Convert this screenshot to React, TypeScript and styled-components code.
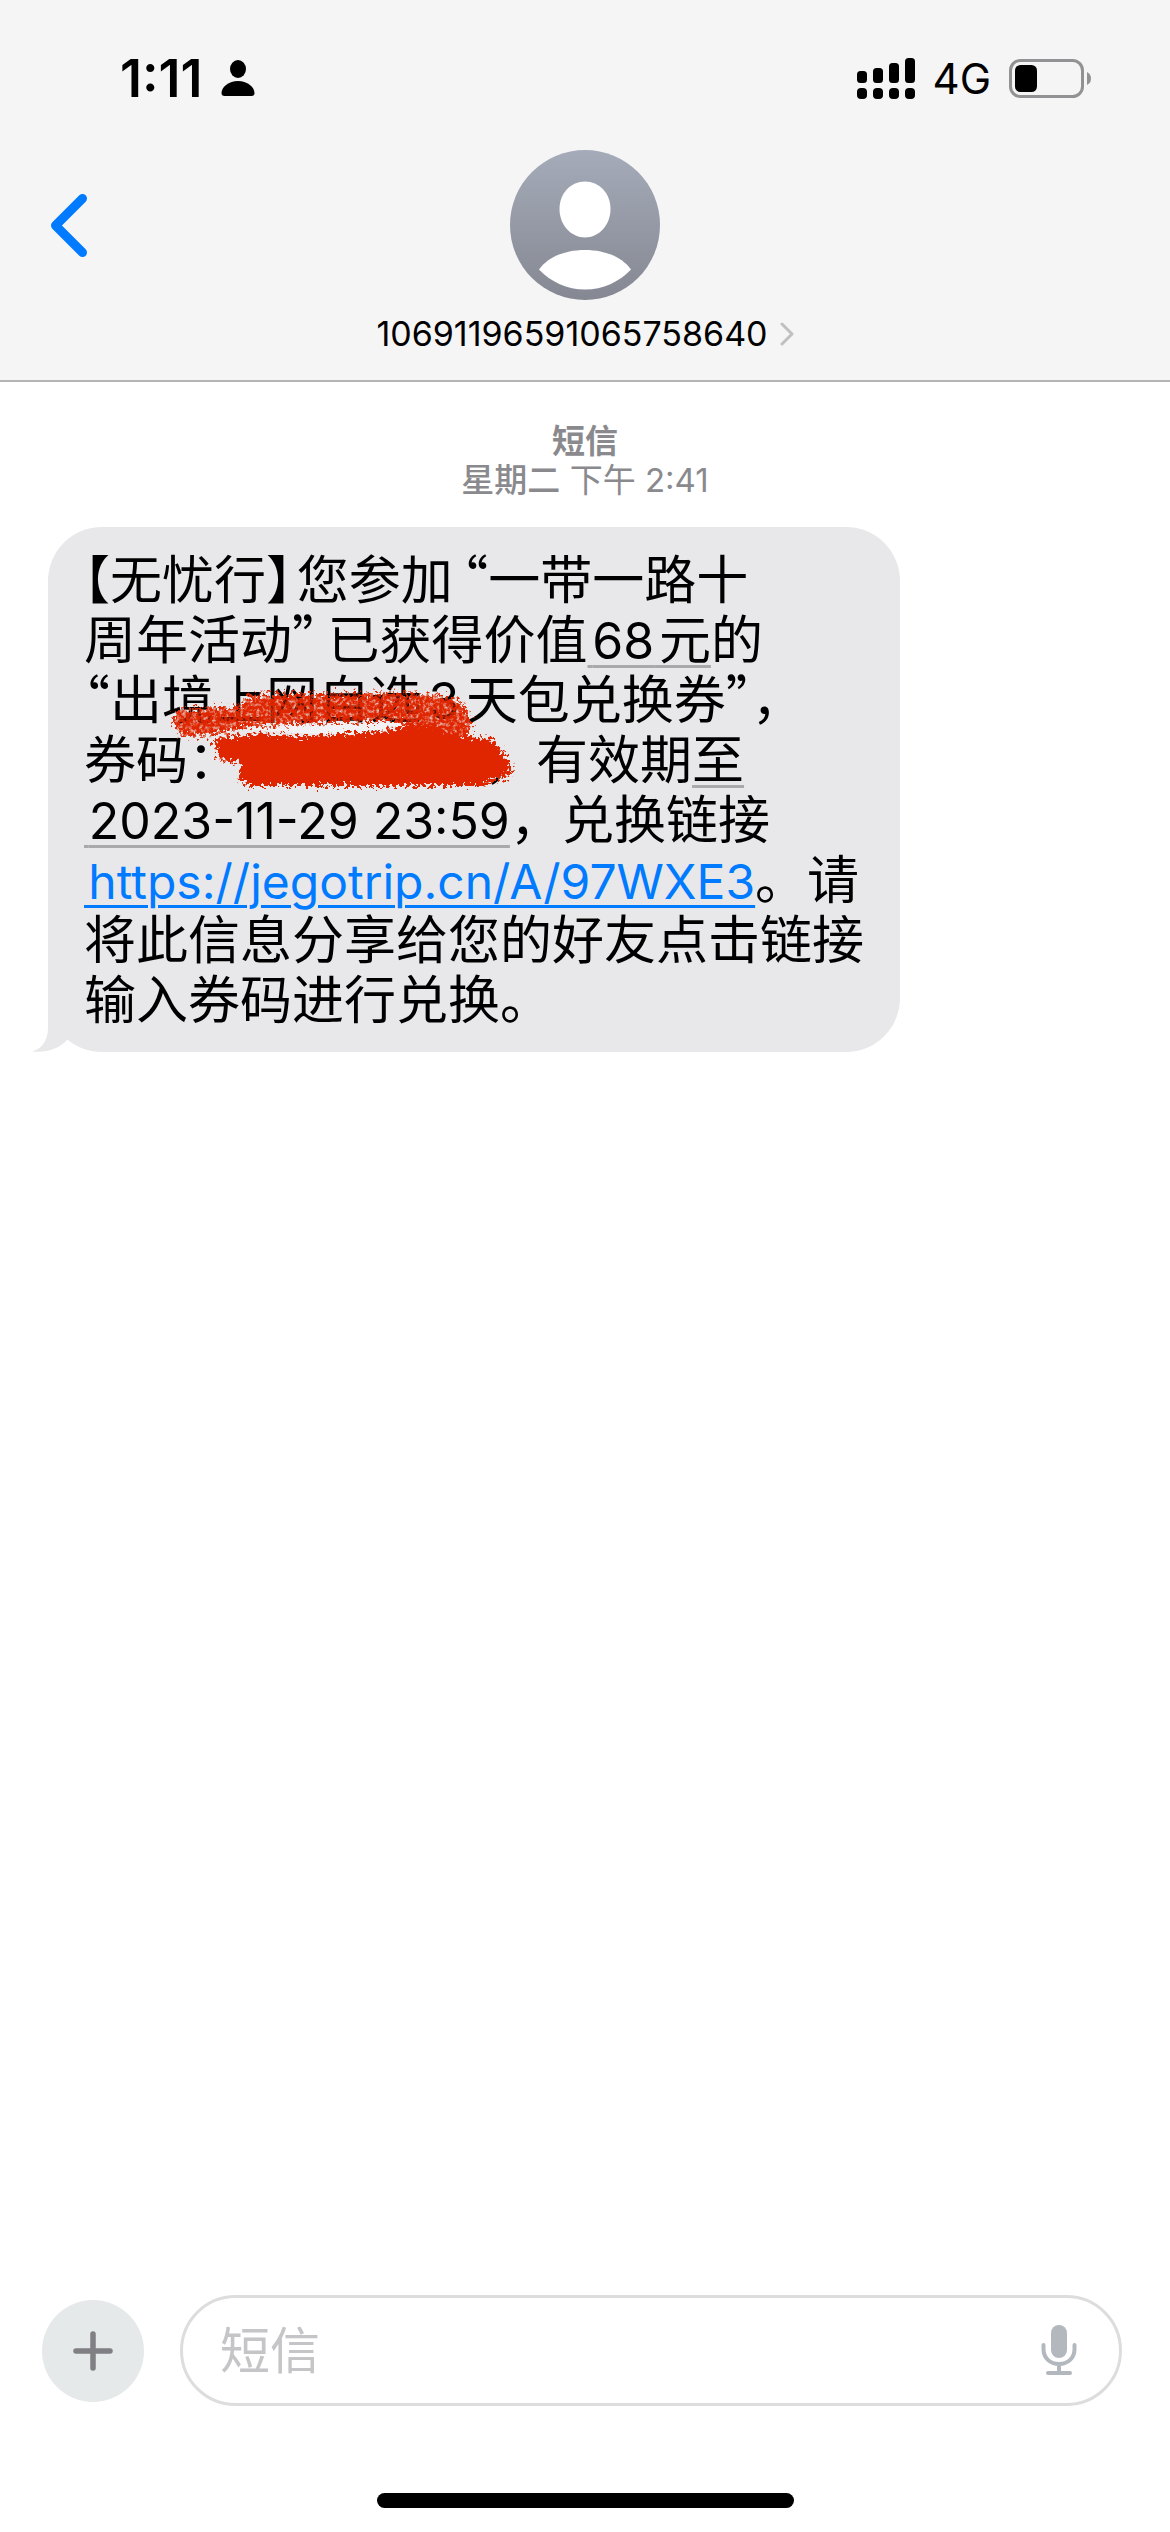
import React from 'react';
import styled, { createGlobalStyle } from 'styled-components';

const colors = {
  black: '#000000',
  blue: '#007aff',
  bar: '#f5f5f5',
  hairline: '#b4b4b6',
  gray: '#8a8a8e',
  bubble: '#e8e8ea',
  detected: '#a9a9ab',
  placeholder: '#c5c5c7',
  marker: '#e02600',
};

const GlobalStyle = createGlobalStyle`
  * {
    box-sizing: border-box;
  }

  body {
    margin: 0;
    background: #ffffff;
    color: ${colors.black};
    font-family: Inter, "Noto Sans CJK SC", sans-serif;
  }
`;

const Page = styled.div`
  display: flex;
  flex-direction: column;
  min-height: 100vh;
`;

const Header = styled.header`
  background: ${colors.bar};
  border-bottom: 2px solid ${colors.hairline};
`;

const StatusBar = styled.div`
  display: flex;
  justify-content: space-between;
  align-items: center;
  height: 150px;
  padding: 6px 78px 0 120px;
`;

const StatusGroup = styled.div`
  display: flex;
  align-items: center;
  gap: 18px;
`;

const Clock = styled.span`
  font-size: 52px;
  font-weight: 600;
`;

const Network = styled.span`
  font-size: 42px;
`;

const NavBar = styled.div`
  display: grid;
  grid-template-columns: 1fr auto 1fr;
  align-items: start;
  height: 230px;
  padding: 0 48px;
`;

const BackButton = styled.button`
  justify-self: start;
  display: flex;
  margin: 0;
  padding: 42px 0 0;
  border: 0;
  background: none;
`;

const Contact = styled.button`
  display: flex;
  flex-direction: column;
  align-items: center;
  gap: 12px;
  padding: 0;
  border: 0;
  background: none;
  color: inherit;
  font: inherit;
`;

const ContactName = styled.span`
  display: flex;
  align-items: center;
  gap: 12px;
  font-size: 34px;
  line-height: 44px;
`;

const Messages = styled.main`
  flex: 1;
  padding: 40px 48px;
`;

const Stamp = styled.div`
  color: ${colors.gray};
  font-size: 33px;
  line-height: 39px;
  text-align: center;
`;

const StampService = styled.div`
  font-weight: 600;
`;

const StampDay = styled.span`
  font-weight: 500;
`;

const Bubble = styled.div`
  position: relative;
  width: fit-content;
  margin-top: 27px;
  padding: 24px 36px 21px;
  border-radius: 54px;
  background: ${colors.bubble};
`;

const Tail = styled.svg`
  position: absolute;
  left: -16px;
  bottom: 0;
`;

const MessageText = styled.p`
  position: relative;
  margin: 0;
  font-size: 52px;
  line-height: 60px;
  text-autospace: normal;
`;

/* punctuation set at half of its full width */
const Half = styled.span`
  font-family: "Noto Sans CJK SC", sans-serif;
  font-feature-settings: "halt";
  line-height: 1;
`;

const Digits = styled.span`
  font-size: 50px;
  line-height: 1;
`;

const Detected = styled.span`
  text-decoration: underline;
  text-decoration-color: ${colors.detected};
  text-decoration-thickness: 3px;
  text-underline-offset: 6px;
`;

const Link = styled.a`
  color: ${colors.blue};
  font-size: 48px;
  line-height: 1;
  text-decoration-thickness: 3px;
  text-underline-offset: 6px;
`;

const Redacted = styled.span`
  position: relative;
  display: inline-block;
  width: 244px;
  height: 50px;
  vertical-align: bottom;
`;

const Marker = styled.svg`
  position: absolute;
  left: -80px;
  bottom: -4px;
`;

const Composer = styled.form`
  display: flex;
  align-items: center;
  gap: 36px;
  padding: 0 48px 0 42px;
`;

const AddButton = styled.button`
  display: flex;
  align-items: center;
  justify-content: center;
  width: 102px;
  height: 102px;
  padding: 0;
  border: 0;
  border-radius: 50%;
  background: #e5e9ea;
`;

const Field = styled.div`
  display: flex;
  flex: 1;
  align-items: center;
  height: 111px;
  padding: 0 42px 0 37px;
  border: 3px solid #dddddd;
  border-radius: 56px;
`;

const FieldInput = styled.input`
  flex: 1;
  min-width: 0;
  padding: 0;
  border: 0;
  outline: 0;
  background: none;
  color: inherit;
  font-family: inherit;
  font-size: 50px;

  &::placeholder {
    color: ${colors.placeholder};
    opacity: 1;
  }
`;

const MicButton = styled.button`
  display: flex;
  padding: 0;
  border: 0;
  background: none;
`;

const HomeIndicator = styled.div`
  width: 417px;
  height: 15px;
  margin: 87px auto 24px;
  border-radius: 8px;
  background: ${colors.black};
`;

const PersonIcon = () =>
  <svg width="34" height="36" viewBox="0 0 34 36" aria-hidden="true">
    <ellipse cx="17" cy="9" rx="8" ry="9" />
    <path d="M17 21C26 21 33.500 27 33.500 33Q33.500 36 30.500 36H3.500Q.5 36 .5 33C.5 27 8 21 17 21Z" />
  </svg>

const SignalIcon = () =>
  <svg width="58" height="41" viewBox="0 0 58 41" aria-hidden="true">
    <rect x="0" y="13" width="10" height="12" rx="3.500" />
    <rect x="16" y="10" width="10" height="15" rx="3.500" />
    <rect x="32" y="5" width="10" height="20" rx="3.500" />
    <rect x="48" y="0" width="10" height="25" rx="3.500" />
    {[0, 16, 32, 48].map(x =>
      <rect key={x} x={x} y="30" width="10" height="11" rx="4" />
    )}
  </svg>

const BatteryIcon = () =>
  <svg width="83" height="39" viewBox="0 0 83 39" aria-hidden="true">
    <rect x="1.500" y="1.500" width="72" height="36" rx="10" fill="none" stroke="#929294" strokeWidth="3" />
    <rect x="6" y="6" width="22" height="27" rx="5.500" />
    <path d="M78 13Q82 15 82 19.500Q82 24 78 26Z" fill="#929294" />
  </svg>

const BackIcon = () =>
  <svg width="40" height="66" viewBox="0 0 40 66" aria-hidden="true">
    <path d="M34.500 6.500L7.500 33.500L34.500 60.500" fill="none" stroke={colors.blue} strokeWidth="9" strokeLinecap="round" strokeLinejoin="round" />
  </svg>

const Avatar = () =>
  <svg width="150" height="150" viewBox="0 0 150 150" aria-hidden="true">
    <defs>
      <linearGradient id="avatar" x1="0" y1="0" x2="0" y2="1">
        <stop offset="0" stopColor="#a5abb9" />
        <stop offset="1" stopColor="#858892" />
      </linearGradient>
    </defs>
    <circle cx="75" cy="75" r="75" fill="url(#avatar)" />
    <path d="M75 31.500C89 31.500 100.500 43 100.500 59C100.500 75 89 87.500 75 87.500C61 87.500 49.500 75 49.500 59C49.500 43 61 31.500 75 31.500Z" fill="#fff" />
    <path d="M29 119.500C38 107 55 100 75 100C95 100 112 107 121 119.500C109 132 93 139.500 75 139.500C57 139.500 41 132 29 119.500Z" fill="#fff" />
  </svg>

const ChevronIcon = () =>
  <svg width="14" height="24" viewBox="0 0 14 24" aria-hidden="true">
    <path d="M2 2L12 12L2 22" fill="none" stroke="#c0c0c3" strokeWidth="3" strokeLinecap="round" strokeLinejoin="round" />
  </svg>

const PlusIcon = () =>
  <svg width="40" height="40" viewBox="0 0 40 40" aria-hidden="true">
    <path d="M20 3V37M3 20H37" fill="none" stroke="#7f7f84" strokeWidth="5.500" strokeLinecap="round" />
  </svg>

const MicIcon = () =>
  <svg width="36" height="51" viewBox="0 0 36 51" aria-hidden="true">
    <rect x="10" y="0" width="16" height="33" rx="8" fill="#b3b8bf" />
    <path d="M2.500 20V24C2.500 33 9 39 18 39C27 39 33.500 33 33.500 24V20M18 39V48M7 48H29" fill="none" stroke="#b3b8bf" strokeWidth="4" strokeLinecap="round" />
  </svg>

const Scribble = () =>
  <Marker width="370" height="120" viewBox="160 675 370 120" aria-hidden="true">
    <defs>
      <filter id="rough" x="-5%" y="-15%" width="110%" height="130%">
        <feTurbulence type="fractalNoise" baseFrequency="0.3" numOctaves="3" seed="4" result="noise" />
        <feDisplacementMap in="SourceGraphic" in2="noise" scale="18" xChannelSelector="R" yChannelSelector="G" />
        <feGaussianBlur stdDeviation="0.6" />
      </filter>
      <filter id="grain" x="-5%" y="-15%" width="110%" height="130%">
        <feTurbulence type="fractalNoise" baseFrequency="0.3" numOctaves="3" seed="9" result="noise" />
        <feDisplacementMap in="SourceGraphic" in2="noise" scale="20" xChannelSelector="R" yChannelSelector="G" result="edge" />
        <feColorMatrix in="noise" type="matrix" values="0 0 0 0 0  0 0 0 0 0  0 0 0 0 0  0 0 2 0 -0.1" result="holes" />
        <feComposite in="edge" in2="holes" operator="in" />
        <feGaussianBlur stdDeviation="0.6" />
      </filter>
    </defs>
    <path d="M246 729Q310 721 424 722L414 732Q330 738 246 729Z" fill="#f2f1f3" />
    <path d="M173 716Q176 707 200 709L240 706L246 696L272 694L330 694L400 693L440 695L464 704L472 724L468 740L410 730L400 722L330 722L250 727L215 735L184 737Q173 730 173 716Z" fill={colors.marker} filter="url(#grain)" />
    <path d="M214 739L262 733L300 737L380 731L420 724L468 737L492 739L510 762L511 775L490 782L480 786H250L238 781L241 763L218 759Z" fill={colors.marker} filter="url(#rough)" />
  </Marker>

const App = () =>
  <Page>
    <GlobalStyle />
    <Header>
      <StatusBar>
        <StatusGroup>
          <Clock>1:11</Clock>
          <PersonIcon />
        </StatusGroup>
        <StatusGroup>
          <SignalIcon />
          <Network>4G</Network>
          <BatteryIcon />
        </StatusGroup>
      </StatusBar>
      <NavBar>
        <BackButton type="button" aria-label="返回">
          <BackIcon />
        </BackButton>
        <Contact type="button">
          <Avatar />
          <ContactName>
            10691196591065758640
            <ChevronIcon />
          </ContactName>
        </Contact>
      </NavBar>
    </Header>
    <Messages>
      <Stamp>
        <StampService>短信</StampService>
        <StampDay>星期二</StampDay> 下午 2:41
      </Stamp>
      <Bubble>
        <Tail width="60" height="60" viewBox="0 0 60 60" aria-hidden="true">
          <path d="M16 0V36C16 48 10 57 0 59.500C14 61 27 57 35 48L60 20V0Z" fill={colors.bubble} />
        </Tail>
        <MessageText lang="zh-CN">
          <Half>【</Half>无忧行<Half>】</Half>&#8202;您参加&thinsp;<Half>“</Half>一带一路十<br />
          周年活动<Half>”</Half>&thinsp;已获得价值<Detected>&#8202;<Digits>68</Digits>&#8202;元</Detected>的<br />
          <Half>“</Half>出境上网自选<Digits>3</Digits>天包兑换券<Half>”</Half>，<br />
          券码：<Redacted><Scribble /></Redacted>，有效期<Detected>至</Detected><br />
          <Detected>&#8202;<Digits>2023-11-29 23:59</Digits></Detected>，兑换链接<br />
          <Link href="https://jegotrip.cn/A/97WXE3">&#8202;https://jegotrip.cn/A/97WXE3</Link>。请<br />
          将此信息分享给您的好友点击链接<br />
          输入券码进行兑换。
        </MessageText>
      </Bubble>
    </Messages>
    <Composer>
      <AddButton type="button" aria-label="添加">
        <PlusIcon />
      </AddButton>
      <Field>
        <FieldInput type="text" placeholder="短信" aria-label="短信" />
        <MicButton type="button" aria-label="听写">
          <MicIcon />
        </MicButton>
      </Field>
    </Composer>
    <HomeIndicator />
  </Page>

export default App;
